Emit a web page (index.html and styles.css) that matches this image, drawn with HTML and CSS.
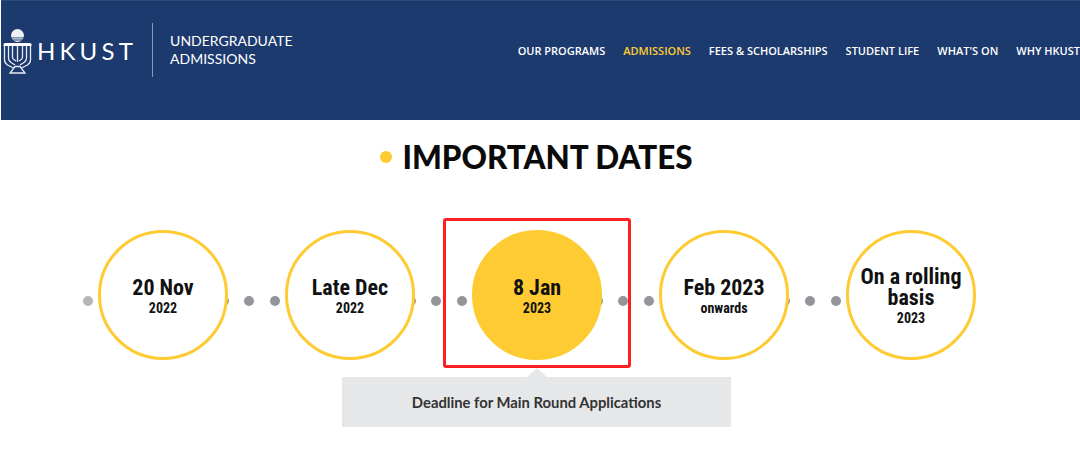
FILE: index.html
```html
<!DOCTYPE html>
<html lang="en">

<head>
  <meta charset="UTF-8" />
  <title>HKUST Undergraduate Admissions</title>
  <link rel="stylesheet" href="styles.css">
</head>

<body>
  <header class="header">
    <div class="brand">
      <svg class="crest" width="29" height="45" viewBox="0 0 29 45">
        <circle cx="14.500" cy="6.500" r="6.500" fill="#eef1f5" />
        <rect x="7" y="8.500" width="15" height="0.800" fill="#1c3a6e" />
        <rect x="7" y="10.500" width="15" height="1" fill="#1c3a6e" />
        <path d="M0.500 15.500q0-1.500 1.500-1.500h25q1.500 0 1.500 1.500v1.500h-28z" fill="#fff" />
        <g fill="none" stroke="#e8ecf2" stroke-width="1.300">
          <path d="M1.500 17v14q0 3 3 5l6 3" />
          <path d="M5.500 17v12q0 3 2.500 4.500l4 2.500" />
          <path d="M9.500 17v11q0 2 2 3l1.500 1" />
          <path d="M27.500 17v14q0 3-3 5l-6 3" />
          <path d="M23.500 17v12q0 3-2.500 4.500l-4 2.500" />
          <path d="M19.500 17v11q0 2-2 3l-1.500 1" />
          <path d="M14.500 17v16" />
          <path d="M12 37.500l-5 6.500h15l-5-6.500z" />
        </g>
      </svg>
      <span class="wordmark">HKUST</span>
      <span class="divider"></span>
      <span class="unit">UNDERGRADUATE<br>ADMISSIONS</span>
    </div>
    <nav class="nav">
      <a>OUR PROGRAMS</a>
      <a class="current">ADMISSIONS</a>
      <a>FEES &amp; SCHOLARSHIPS</a>
      <a>STUDENT LIFE</a>
      <a>WHAT'S ON</a>
      <a>WHY HKUST</a>
    </nav>
  </header>

  <main class="main">
    <h1 class="title"><span class="bullet"></span>IMPORTANT DATES</h1>

    <div class="timeline">
      <div class="step">
        <span class="dot first"></span>
        <div class="circle"><strong>20 Nov</strong><small>2022</small></div>
        <span class="dot behind"></span>
        <span class="dot"></span>
      </div>
      <div class="step">
        <span class="dot"></span>
        <div class="circle"><strong>Late Dec</strong><small>2022</small></div>
        <span class="dot behind"></span>
        <span class="dot"></span>
      </div>
      <div class="step">
        <span class="dot"></span>
        <div class="circle active"><strong>8 Jan</strong><small>2023</small></div>
        <span class="dot behind"></span>
        <span class="dot"></span>
        <div class="highlight"></div>
      </div>
      <div class="step">
        <span class="dot"></span>
        <div class="circle"><strong>Feb 2023</strong><small>onwards</small></div>
        <span class="dot behind"></span>
        <span class="dot"></span>
      </div>
      <div class="step">
        <span class="dot"></span>
        <div class="circle"><strong>On a rolling basis</strong><small>2023</small></div>
      </div>
    </div>

    <div class="note">Deadline for Main Round Applications</div>
  </main>
</body>

</html>
```

FILE: styles.css
```css
:root {
  --navy: #1c3a6e;
  --yellow: #fecb32;
  --grey: #939598;
}

html,
body {
  background: #fff;
  margin: 0;
  padding: 0;
  overflow: hidden;
}

.header {
  display: flex;
  justify-content: space-between;
  height: 119px;
  margin-left: 1px;
  border-top: 1px solid #2d4a7c;
  background: var(--navy);
  color: #fff;
  overflow: hidden;
}

.brand {
  display: flex;
  align-items: center;
  height: 54px;
  margin-top: 22px;
  flex: none;
}

.crest {
  margin: 3px 0 0 2px;
  flex: none;
}

.wordmark {
  margin-left: 5px;
  font-family: "Lato", sans-serif;
  font-weight: 400;
  font-size: 24px;
  letter-spacing: 4.200px;
}

.divider {
  width: 1px;
  height: 54px;
  margin-left: 15px;
  background: #8a9bb8;
}

.unit {
  margin-left: 17px;
  font-family: "Lato", sans-serif;
  font-size: 14px;
  line-height: 18px;
}

.nav {
  display: flex;
  gap: 18px;
  margin: 42px 0 0 0;
  flex: none;
  font-family: "Open Sans", sans-serif;
  font-weight: 600;
  font-size: 11px;
  line-height: 16px;
}

.nav .current {
  color: var(--yellow);
}

.main {
  display: flex;
  flex-direction: column;
  align-items: center;
  width: 1073px;
}

.title {
  display: flex;
  align-items: center;
  gap: 10px;
  margin: 17px 0 0;
  font-family: "Lato", sans-serif;
  font-weight: 900;
  font-size: 31.400px;
  line-height: 40px;
  color: #0a0a0a;
}

.bullet {
  width: 12px;
  height: 12px;
  border-radius: 50%;
  background: var(--yellow);
}

.timeline {
  display: flex;
  margin: 53px 0 0 -14px;
}

.step {
  position: relative;
  display: flex;
  align-items: center;
}

.dot {
  width: 10px;
  height: 10px;
  margin-top: 12px;
  border-radius: 50%;
  background: var(--grey);
  flex: none;
}

.dot.first {
  background: #b4b5b7;
}

.step .dot:last-of-type {
  margin-left: 15px;
  margin-right: 16px;
}

.step:last-child .dot:last-of-type {
  margin: 12px 0 0;
}

.dot.behind {
  margin-left: -9px;
}

.circle {
  position: relative;
  display: flex;
  flex-direction: column;
  justify-content: center;
  align-items: center;
  box-sizing: border-box;
  width: 130px;
  height: 130px;
  margin-left: 5px;
  padding: 3px 8px 0;
  border: 3px solid var(--yellow);
  border-radius: 50%;
  background: #fff;
  text-align: center;
  color: #111;
  font-family: "Roboto", sans-serif;
  font-stretch: 75%;
}

.circle strong {
  font-size: 22px;
  font-weight: 700;
  line-height: 21px;
}

.circle small {
  margin-top: 1px;
  font-size: 14px;
  font-weight: 700;
  line-height: 18px;
}

.circle.active {
  background: var(--yellow);
}

/* Marco rojo sobre la fecha activa */
.highlight {
  position: absolute;
  left: -14px;
  top: -12px;
  box-sizing: border-box;
  width: 188px;
  height: 150px;
  border: 3px solid #fc2020;
  border-radius: 3px;
}

.note {
  position: relative;
  width: 389px;
  margin-top: 17px;
  background: #e6e7e8;
  text-align: center;
  font-family: "Lato", sans-serif;
  font-weight: 700;
  font-size: 14.800px;
  line-height: 50px;
  color: #333;
}

.note::before {
  content: "";
  position: absolute;
  left: 50%;
  top: -9px;
  margin-left: -10px;
  border-left: 10px solid transparent;
  border-right: 10px solid transparent;
  border-bottom: 9px solid #e6e7e8;
}
```
